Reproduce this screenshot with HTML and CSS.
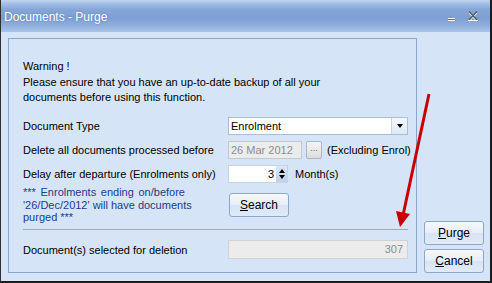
FILE: index.html
```html
<!DOCTYPE html>
<html lang="en">
<head>
    <meta charset="UTF-8">
    <title>Documents - Purge</title>
    <link rel="stylesheet" href="styles.css">
</head>
<body>
    <div class="window">
        <div class="titlebar">
            <span class="title">Documents - Purge</span>
            <span class="wincontrols">
                <svg class="min" width="8" height="4" viewBox="0 0 8 4">
                    <rect x="0" y="0" width="7" height="1" fill="#ffffff"/>
                    <rect x="0" y="1" width="7" height="1" fill="#5a6f90"/>
                    <rect x="0" y="2" width="7" height="1" fill="#ffffff"/>
                </svg>
                <svg class="close" width="12" height="12" viewBox="0 0 12 12">
                    <path d="M2 1.5 L10 10 M10 1.5 L2 10" stroke="#ffffff" stroke-width="1.4" transform="translate(0 1)"/>
                    <path d="M2 1.5 L10 10 M10 1.5 L2 10" stroke="#505a68" stroke-width="1.4"/>
                    <rect x="1" y="10" width="10" height="1" fill="#ffffff"/>
                </svg>
            </span>
        </div>

        <div class="client">
            <div class="group">
                <p class="warn">Warning !</p>
                <p class="intro">Please ensure that you have an up-to-date backup of all your<br>documents before using this function.</p>

                <div class="rows">
                    <div class="row">
                        <label>Document Type</label>
                        <div class="combo">
                            <span class="combo-text">Enrolment</span>
                            <span class="drop"><i class="tri-down"></i></span>
                        </div>
                    </div>
                    <div class="row">
                        <label>Delete all documents processed before</label>
                        <div class="field disabled date">26 Mar 2012</div>
                        <button class="dots">...</button>
                        <span class="after">(Excluding Enrol)</span>
                    </div>
                    <div class="row">
                        <label>Delay after departure (Enrolments only)</label>
                        <div class="spin">
                            <span class="spin-value">3</span>
                            <span class="spin-btns"><i class="tri-up"></i><i class="tri-down"></i></span>
                        </div>
                        <span class="after months">Month(s)</span>
                    </div>
                    <div class="row note-row">
                        <div class="note">
                            <span class="j">*** Enrolments ending on/before</span>
                            <span>'26/Dec/2012' will have documents</span>
                            <span>purged ***</span>
                        </div>
                        <button class="btn search"><u>S</u>earch</button>
                    </div>
                </div>

                <hr class="sep">

                <div class="row result-row">
                    <label>Document(s) selected for deletion</label>
                    <div class="field disabled count">307</div>
                </div>
            </div>

            <div class="actions">
                <button class="btn"><u>P</u>urge</button>
                <button class="btn"><u>C</u>ancel</button>
            </div>
        </div>

        <svg class="arrow" width="492" height="283" viewBox="0 0 492 283">
            <line x1="429" y1="94" x2="403.5" y2="213" stroke="#c80000" stroke-width="3"/>
            <polygon points="400,227 396,211 410,214" fill="#c80000"/>
        </svg>
    </div>
</body>
</html>
```

FILE: styles.css
```css
body {
    margin: 0;
    font-family: "Liberation Sans", Arial, sans-serif;
    font-size: 11px;
    color: #000;
}
.window {
    position: relative;
    width: 492px;
    height: 283px;
    box-sizing: border-box;
    display: flex;
    flex-direction: column;
    background-color: #d6e4f8;
    border-left: 1px solid #2e2e2e;
    border-right: 2px solid #1c1c1c;
    border-bottom: 2px solid #1c1c1c;
}
.titlebar {
    flex: none;
    height: 32px;
    display: flex;
    align-items: center;
    justify-content: space-between;
    padding: 0 11px 0 3px;
    background: linear-gradient(#c4d6ef 0, #a9c2e7 3px, #86a7d8 9px, #7c9ed2 18px, #92b0de 26px, #aac4ea 32px);
    color: #fff;
    font-size: 12px;
    text-shadow: 0 0 2px #5a7cb4;
}
.title {
    margin-top: 1px;
}
.wincontrols {
    display: flex;
    align-items: center;
    gap: 11px;
}
.wincontrols .min {
    margin-top: 7px;
}
.client {
    flex: 1;
    display: flex;
    gap: 7px;
    padding: 6px 6px 8px 7px;
}
.group {
    width: 409px;
    box-sizing: border-box;
    border: 1px solid #8ba6cc;
    padding: 20px 8px 0 14px;
}
.warn, .intro {
    margin: 0;
    line-height: 15px;
}
.intro {
    margin-top: 1px;
}
.rows {
    margin-top: 12px;
}
.row {
    display: flex;
    align-items: center;
    height: 18px;
    margin-top: 6px;
    white-space: nowrap;
}
.rows .row:first-child {
    margin-top: 0;
}
.row label {
    flex: none;
    width: 205px;
}
.combo {
    width: 180px;
    height: 18px;
    box-sizing: border-box;
    display: flex;
    border: 1px solid #a9bedb;
    background-color: #fff;
}
.combo-text {
    flex: 1;
    padding-left: 2px;
    line-height: 16px;
}
.drop {
    width: 15px;
    display: flex;
    align-items: center;
    justify-content: center;
    border-left: 1px solid #c6d5ea;
    background: linear-gradient(#f5f8fd, #dfe8f5);
}
.tri-down, .tri-up {
    display: block;
    width: 0;
    height: 0;
    border-left: 3.5px solid transparent;
    border-right: 3.5px solid transparent;
}
.tri-down {
    border-top: 4px solid #000;
}
.tri-up {
    border-bottom: 4px solid #000;
}
.field {
    flex: none;
    height: 18px;
    box-sizing: border-box;
    border: 1px solid #c3c9d2;
    line-height: 16px;
    padding: 0 2px;
}
.field.disabled {
    background-color: #ececec;
    color: #8c8c8c;
}
.date {
    width: 74px;
}
.dots {
    flex: none;
    width: 16px;
    height: 18px;
    margin-left: 4px;
    padding: 0 0 4px;
    border: 1px solid #a9b6c8;
    border-radius: 2px;
    background: linear-gradient(#f4f4f4, #dcdcdc);
    color: #6a6a6a;
    font: inherit;
    font-size: 9px;
}
.after {
    margin-left: 5px;
}
.months {
    margin-left: 7px;
}
.spin {
    flex: none;
    width: 60px;
    height: 18px;
    box-sizing: border-box;
    display: flex;
    border: 1px solid #c7d3e3;
    background-color: #fff;
}
.spin-value {
    flex: 1;
    text-align: right;
    line-height: 16px;
    padding-right: 2px;
}
.spin-btns {
    width: 11px;
    display: flex;
    flex-direction: column;
    align-items: center;
    justify-content: center;
    gap: 2px;
    background: linear-gradient(#dbe7f7, #bcd0ee);
}
.note-row {
    height: auto;
    align-items: flex-start;
    margin-top: 3px;
    white-space: normal;
}
.note {
    flex: none;
    width: 205px;
    color: #1d3a8e;
    line-height: 12.5px;
}
.note span {
    display: block;
}
.note .j {
    width: 162px;
    text-align: justify;
    text-align-last: justify;
}
.btn {
    width: 60px;
    height: 24px;
    padding: 0;
    border: 1px solid #8fa6c8;
    border-radius: 3px;
    background: linear-gradient(#f6f9fd, #e6eef9 48%, #d7e4f5 52%, #e1eaf7);
    font: inherit;
    font-size: 12px;
    color: #000;
}
.search {
    margin: 7px 0 0 1px;
}
.sep {
    margin: 5.5px 0 0;
    border: none;
    border-top: 1px solid #a4a8ae;
    height: 0;
}
.result-row {
    margin-top: 10px;
    height: 19px;
}
.count {
    width: 180px;
    height: 19px;
    text-align: right;
    padding-right: 4px;
    line-height: 17px;
    border-color: #d2d2d2;
}
.actions {
    width: 60px;
    display: flex;
    flex-direction: column;
    justify-content: flex-end;
    gap: 4px;
}
.arrow {
    position: absolute;
    left: -1px;
    top: 0;
    pointer-events: none;
}
```
